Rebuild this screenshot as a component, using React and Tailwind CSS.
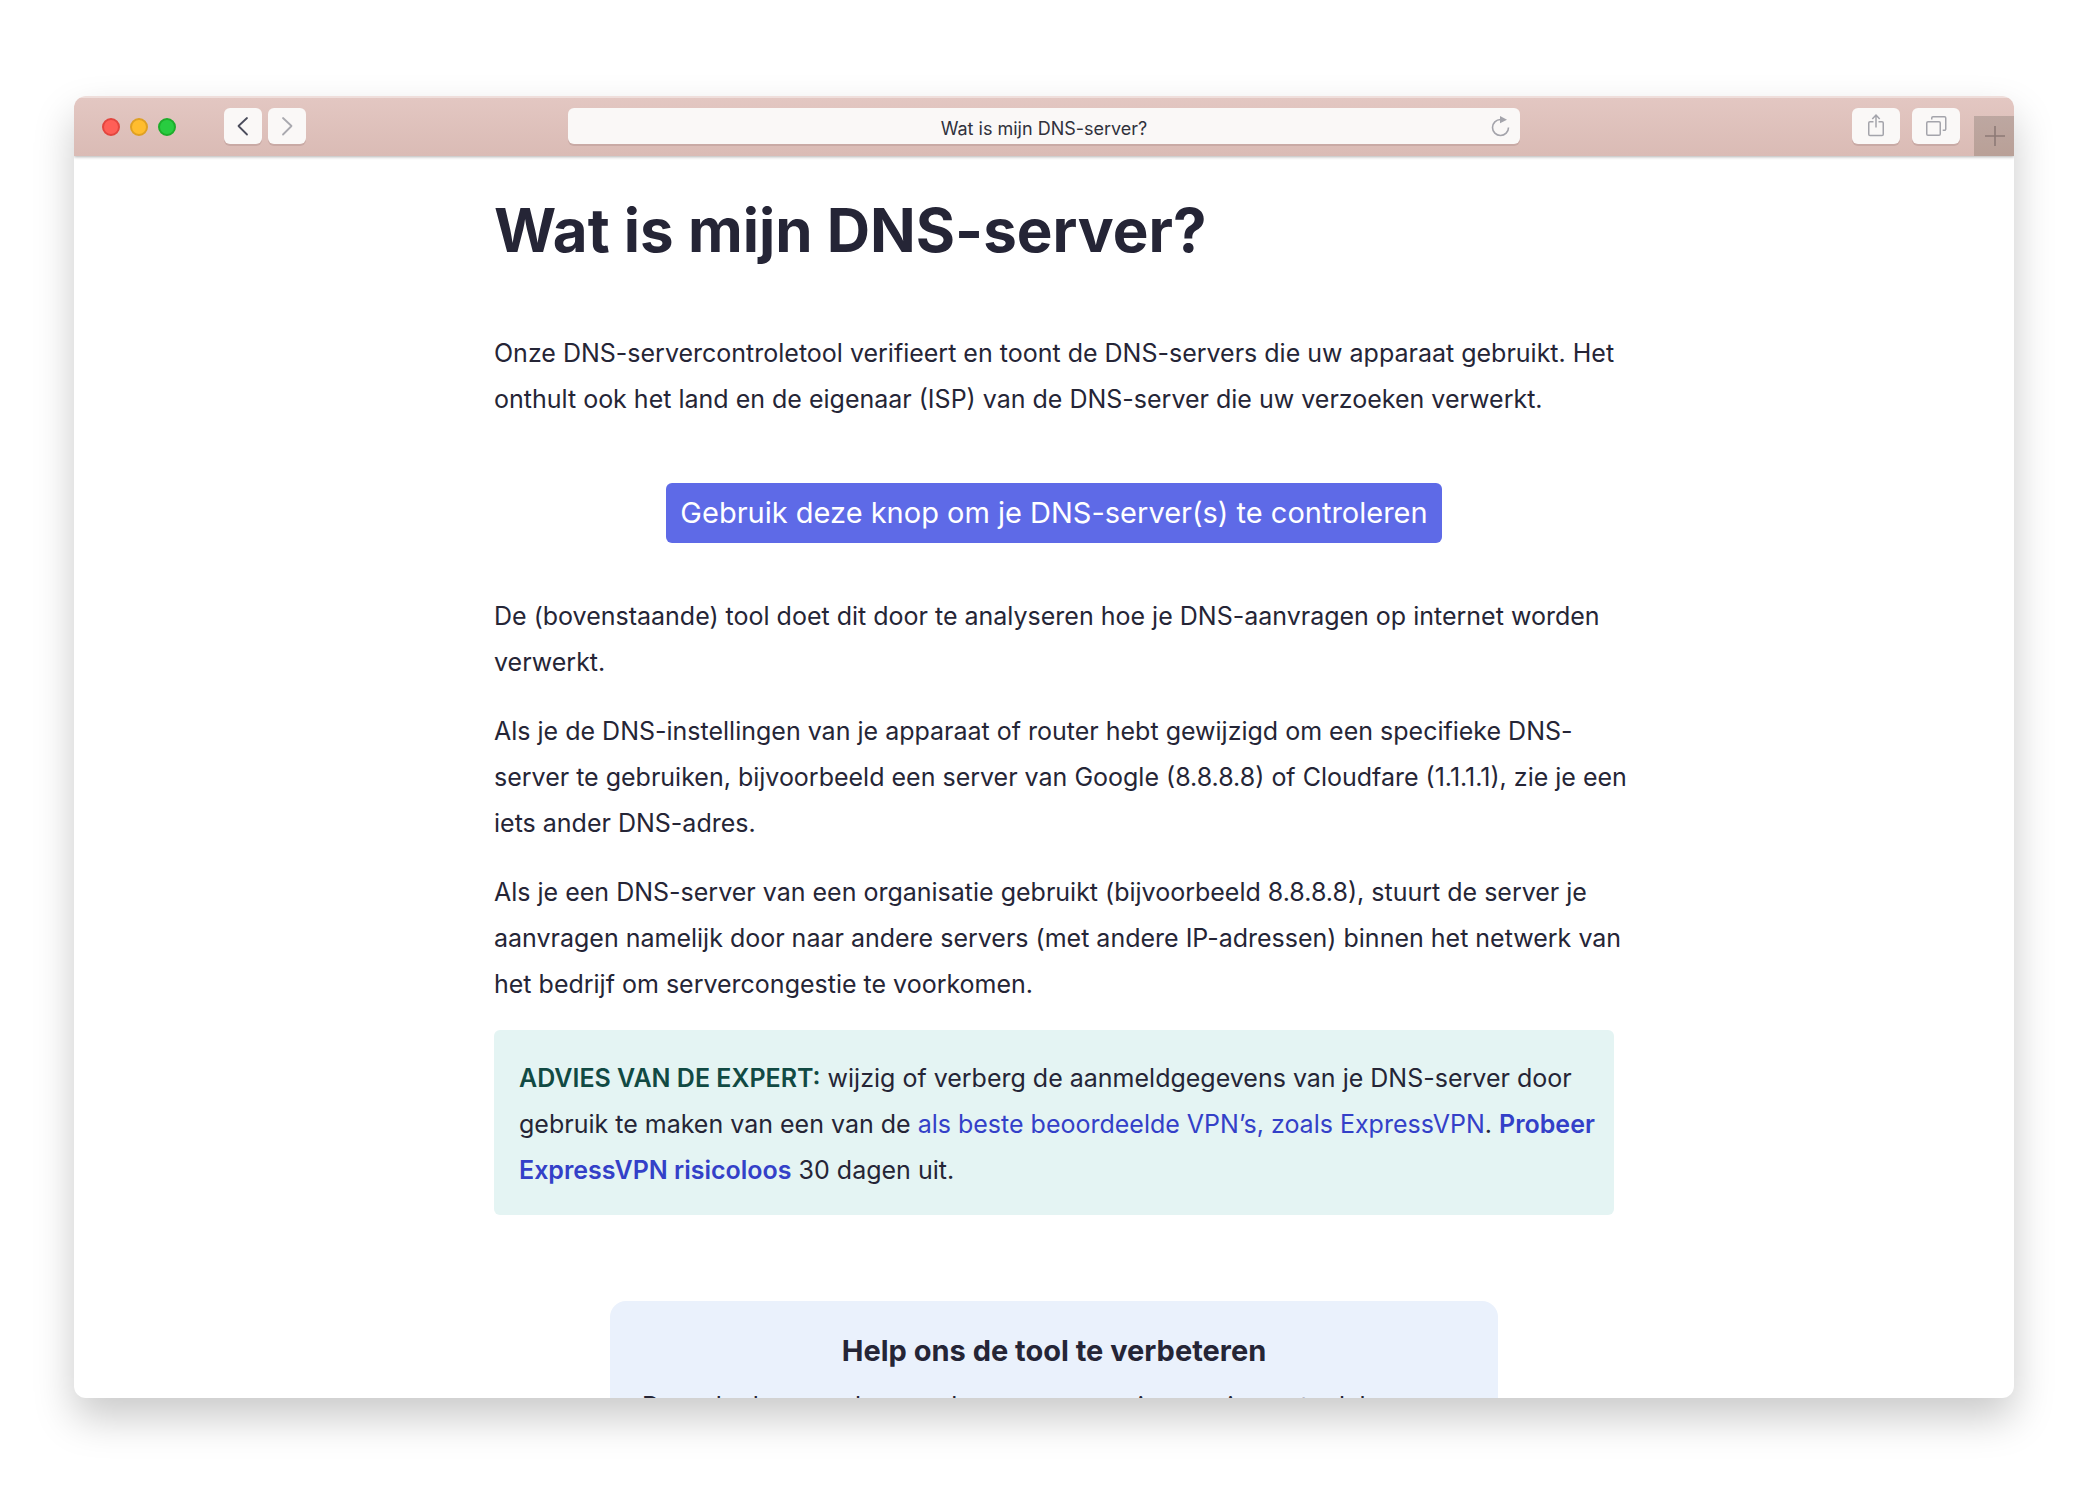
import React from 'react';

const iconButton =
  'flex h-9 items-center justify-center rounded-md bg-[#faf8f7] shadow-[0_2px_0_#c9aaa5]';

function TitleBar() {
  return (
    <header className="relative z-10 flex h-15 shrink-0 items-start border-t-2 border-[#efdedb] bg-linear-to-b from-[#e3c7c2] to-[#dabbb5] shadow-[0_1px_3px_rgba(0,0,0,0.3)]">
      <div className="flex flex-1 items-center">
        <div className="mt-3 ml-7 flex gap-2.5">
          <button aria-label="Sluiten" className="size-4.5 rounded-full border-2 border-[#e2463f] bg-[#ff5f57]" />
          <button aria-label="Minimaliseren" className="size-4.5 rounded-full border-2 border-[#dfa023] bg-[#ffbd2e]" />
          <button aria-label="Maximaliseren" className="size-4.5 rounded-full border-2 border-[#1dad2b] bg-[#28cc40]" />
        </div>
        <div className="mt-2.5 ml-12 flex gap-1.5">
          <button aria-label="Vorige" className={`${iconButton} w-[38px]`}>
            <svg width="38" height="36" viewBox="0 0 38 36" fill="none" stroke="#4b4d5c" strokeWidth="1.8" strokeLinecap="round" strokeLinejoin="round">
              <path d="M23 10 14.500 18l8.500 8.500" />
            </svg>
          </button>
          <button aria-label="Volgende" className={`${iconButton} w-[38px]`}>
            <svg width="38" height="36" viewBox="0 0 38 36" fill="none" stroke="#a9a9af" strokeWidth="1.8" strokeLinecap="round" strokeLinejoin="round">
              <path d="M15 10 23.500 18 15 26.500" />
            </svg>
          </button>
        </div>
      </div>
      <div className="mt-2.5 flex h-9 w-[952px] items-center rounded-md bg-[#faf8f7] shadow-[0_2px_0_#c9aaa5]">
        <input
          aria-label="Adres"
          defaultValue="Wat is mijn DNS-server?"
          className="h-9 min-w-0 flex-1 bg-transparent pt-1 pl-10 text-center text-[18px] text-[#30313c] outline-none"
        />
        <button aria-label="Vernieuwen" className="h-9 w-10">
          <svg width="40" height="36" viewBox="0 0 40 36" fill="none">
            <path d="M20.500 11.500A8 8 0 1 0 28.500 19.500" stroke="#a4a4ab" strokeWidth="1.600" />
            <path d="M20 8v7.200l7-3.400z" fill="#a4a4ab" />
          </svg>
        </button>
      </div>
      <div className="flex flex-1 justify-end">
        <div className="mt-2.5 mr-3.5 flex gap-3">
          <button aria-label="Delen" className={`${iconButton} w-12`}>
            <svg width="48" height="36" viewBox="0 0 48 36" fill="none" stroke="#a4a4ab" strokeWidth="1.500">
              <path d="M21.500 13.750H18a1.250 1.250 0 0 0-1.250 1.250v11.250a1.250 1.250 0 0 0 1.250 1.250H30a1.250 1.250 0 0 0 1.250-1.250V15a1.250 1.250 0 0 0-1.250-1.250h-3.500M24 19.500V7M20.300 11 24 7l3.700 4" />
            </svg>
          </button>
          <button aria-label="Tabbladen" className={`${iconButton} w-12`}>
            <svg width="48" height="36" viewBox="0 0 48 36" fill="none" stroke="#a4a4ab" strokeWidth="1.500">
              <rect x="14.750" y="13.750" width="13.500" height="13.500" rx="1.250" />
              <path d="M19.750 11.500V10A1.250 1.250 0 0 1 21 8.750h11.500A1.250 1.250 0 0 1 33.750 10v11a1.250 1.250 0 0 1-1.250 1.250h-1.800" />
            </svg>
          </button>
        </div>
        <button aria-label="Nieuw tabblad" className="mt-[18px] h-10 w-10 bg-linear-to-b from-[#bda7a1] to-[#b9a097]">
          <svg width="40" height="40" viewBox="0 0 40 40" stroke="#8d7a76" strokeWidth="1.600">
            <path d="M11 20h20M21 10v20" />
          </svg>
        </button>
      </div>
    </header>
  );
}

export default function App() {
  return (
    <div className="h-screen bg-white pt-24 pr-[76px] pb-24 pl-[74px] font-['Inter','Liberation_Sans',sans-serif]">
      <div className="flex h-full flex-col overflow-hidden rounded-xl bg-white shadow-[0_20px_40px_rgba(0,0,0,0.21)]">
        <TitleBar />
        <main className="min-h-0 flex-1 overflow-hidden text-[25px] leading-[46px] text-[#252536]">
          <article className="ml-[420px] max-w-[1120px] pt-[38px]">
            <h1 className="text-[60px] leading-[72px] font-bold">Wat is mijn DNS-server?</h1>
            <p className="mt-16 -mr-4">
              Onze DNS-servercontroletool verifieert en toont de DNS-servers die uw apparaat gebruikt. Het onthult ook
              het land en de eigenaar (ISP) van de DNS-server die uw verzoeken verwerkt.
            </p>
            <div className="mt-[61px] flex justify-center">
              <button className="h-15 w-[776px] rounded-md bg-[#5e6ae7] text-[29px] whitespace-nowrap text-white">
                Gebruik deze knop om je DNS-server(s) te controleren
              </button>
            </div>
            <div className="mt-[50px] -mr-4 flex flex-col gap-[23px]">
              <p>
                De (bovenstaande) tool doet dit door te analyseren hoe je DNS-aanvragen op internet worden verwerkt.
              </p>
              <p>
                Als je de DNS-instellingen van je apparaat of router hebt gewijzigd om een specifieke DNS-server te
                gebruiken, bijvoorbeeld een server van Google (8.8.8.8) of Cloudfare (1.1.1.1), zie je een iets ander
                DNS-adres.
              </p>
              <p>
                Als je een DNS-server van een organisatie gebruikt (bijvoorbeeld 8.8.8.8), stuurt de server je aanvragen
                namelijk door naar andere servers (met andere IP-adressen) binnen het netwerk van het bedrijf om
                servercongestie te voorkomen.
              </p>
            </div>
            <aside className="mt-[23px] rounded-md bg-[#e4f4f3] pt-[25px] pr-3 pb-[22px] pl-[25px]">
              <strong className="font-semibold text-[#114a43]">ADVIES VAN DE EXPERT:</strong> wijzig of verberg de
              aanmeldgegevens van je DNS-server door gebruik te maken van een van de{' '}
              <a href="#vpn" className="text-[#3340c8]">als beste beoordeelde VPN’s, zoals ExpressVPN</a>.{' '}
              <a href="#probeer" className="font-semibold text-[#3340c8]">Probeer ExpressVPN risicoloos</a> 30 dagen uit.
            </aside>
            <section className="mx-auto mt-[86px] w-[888px] rounded-2xl bg-[#eaf1fc] px-8 pt-[30px] pb-8">
              <h2 className="text-center text-[29px] leading-10 font-bold">Help ons de tool te verbeteren</h2>
              <p className="mt-3">Door de door ons bewaarde gegevens en je ervaringen te delen</p>
            </section>
          </article>
        </main>
      </div>
    </div>
  );
}
